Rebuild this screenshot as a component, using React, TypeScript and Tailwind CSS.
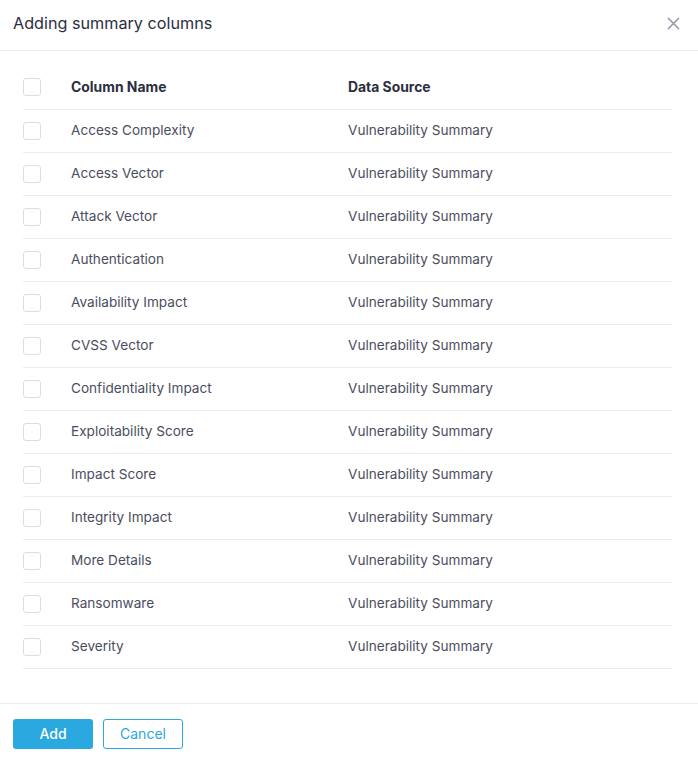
const rows = [
  'Access Complexity',
  'Access Vector',
  'Attack Vector',
  'Authentication',
  'Availability Impact',
  'CVSS Vector',
  'Confidentiality Impact',
  'Exploitability Score',
  'Impact Score',
  'Integrity Impact',
  'More Details',
  'Ransomware',
  'Severity',
];

function Checkbox() {
  return <span className="block h-[18px] w-[18px] rounded-[3px] border border-[#d9dde4] bg-white" />;
}

export default function App() {
  return (
    <div
      className="flex h-[761px] w-[698px] flex-col bg-white text-[#3f4254]"
      style={{ fontFamily: 'Inter, "Noto Sans", sans-serif' }}
    >
      {/* Header */}
      <div className="flex h-[51px] shrink-0 items-center justify-between border-b border-[#ebedf2] pb-[4px] pl-[13px] pr-[18px]">
        <h2 className="text-[16.2px] font-normal text-[#2c2e3e]">Adding summary columns</h2>
        <button className="text-[#9a9daa]">
          <svg width="13" height="13" viewBox="0 0 14 14" fill="none" stroke="currentColor" strokeWidth="1.6" strokeLinecap="round">
            <path d="M1.5 1.5l11 11M12.5 1.5l-11 11" />
          </svg>
        </button>
      </div>

      {/* Body */}
      <div className="flex-1 pl-[23px] pr-[26px] pt-[15px]">
        <table className="w-full border-collapse text-[13.6px]">
          <thead>
            <tr className="h-[43px] border-b border-[#ebedf2]">
              <th className="w-[48px] p-0 text-left align-middle">
                <Checkbox />
              </th>
              <th className="w-[277px] p-0 text-left text-[13.9px] font-bold text-[#2c2e3e]">Column Name</th>
              <th className="p-0 text-left text-[13.9px] font-bold text-[#2c2e3e]">Data Source</th>
            </tr>
          </thead>
          <tbody>
            {rows.map((name) => (
              <tr key={name} className="h-[43px] border-b border-[#ebedf2]">
                <td className="p-0 align-middle">
                  <Checkbox />
                </td>
                <td className="p-0 text-[#4a4d5e]">{name}</td>
                <td className="p-0 text-[#4a4d5e]">Vulnerability Summary</td>
              </tr>
            ))}
          </tbody>
        </table>
      </div>

      {/* Footer */}
      <div className="flex h-[58px] shrink-0 items-start gap-[10px] border-t border-[#ebedf2] pl-[13px] pt-[15px]">
        <button className="h-[30px] w-[80px] rounded-[3px] bg-[#2aa9e0] pb-[2px] text-[14px] font-medium text-white">
          Add
        </button>
        <button className="h-[30px] w-[80px] rounded-[3px] border border-[#2aa9e0] bg-white pb-[2px] text-[14px] text-[#2aa9e0]">
          Cancel
        </button>
      </div>
    </div>
  );
}
